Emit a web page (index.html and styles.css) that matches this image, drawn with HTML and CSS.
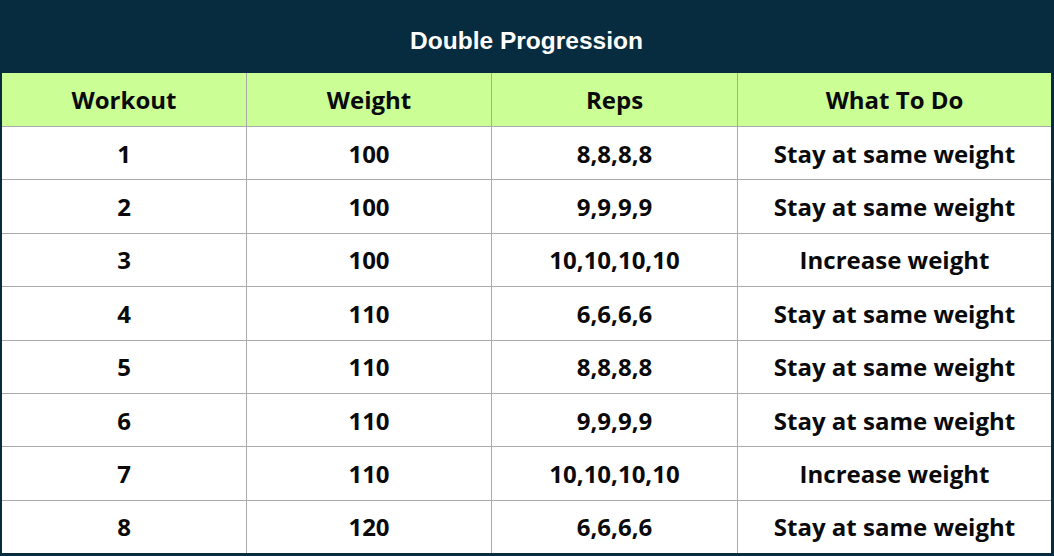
FILE: index.html
```html
<!DOCTYPE html>
<html>
<head>
<meta charset="utf-8">
<link rel="stylesheet" href="styles.css">
</head>
<body>
<div class="frame">
  <div class="title">Double Progression</div>
  <table class="grid">
    <thead>
      <tr><th>Workout</th><th>Weight</th><th>Reps</th><th>What To Do</th></tr>
    </thead>
    <tbody>
      <tr><td>1</td><td>100</td><td>8,8,8,8</td><td>Stay at same weight</td></tr>
      <tr><td>2</td><td>100</td><td>9,9,9,9</td><td>Stay at same weight</td></tr>
      <tr><td>3</td><td>100</td><td>10,10,10,10</td><td>Increase weight</td></tr>
      <tr><td>4</td><td>110</td><td>6,6,6,6</td><td>Stay at same weight</td></tr>
      <tr><td>5</td><td>110</td><td>8,8,8,8</td><td>Stay at same weight</td></tr>
      <tr><td>6</td><td>110</td><td>9,9,9,9</td><td>Stay at same weight</td></tr>
      <tr><td>7</td><td>110</td><td>10,10,10,10</td><td>Increase weight</td></tr>
      <tr><td>8</td><td>120</td><td>6,6,6,6</td><td>Stay at same weight</td></tr>
    </tbody>
  </table>
</div>
</body>
</html>
```
FILE: styles.css
```css
html, body {
  margin: 0;
  padding: 0;
  background: #ffffff;
}
.frame {
  width: 1054px;
  height: 556px;
  box-sizing: border-box;
  background: #072c3f;
  padding: 0 3px 3px 2px;
  display: flex;
  flex-direction: column;
}
.title {
  height: 73px;
  flex: none;
  display: flex;
  align-items: center;
  justify-content: center;
  color: #ffffff;
  font-family: "Liberation Sans", Arial, sans-serif;
  font-weight: 700;
  font-size: 24.5px;
  padding-top: 8px;
  box-sizing: border-box;
}
.grid {
  width: 100%;
  height: 480px;
  border-collapse: collapse;
  table-layout: fixed;
  font-family: "Open Sans", "Noto Sans", sans-serif;
  font-weight: 700;
  font-size: 24px;
  color: #0a0a0a;
}
.grid th, .grid td {
  border: 1px solid #aaaaaa;
  text-align: center;
  padding: 0;
}
.grid thead th { border-top: none; }
.grid th:first-child, .grid td:first-child { border-left: none; width: 244px; }
.grid th:last-child, .grid td:last-child { border-right: none; width: 313px; }
.grid tbody tr:last-child td { border-bottom: none; }
.grid th {
  background: #ccfe96;
  height: 53px;
  font-weight: 700;
}
.grid td {
  background: #ffffff;
  height: 52.25px;
}
.grid th:nth-child(2), .grid td:nth-child(2) { width: 244px; }
.grid th:nth-child(3), .grid td:nth-child(3) { width: 245px; }
```
